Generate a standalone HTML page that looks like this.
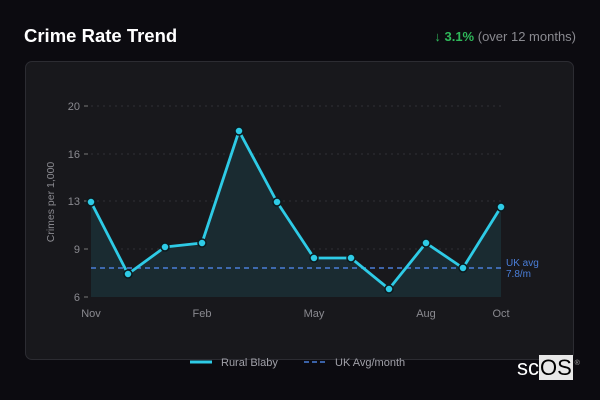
<!DOCTYPE html>
<html><head><meta charset="utf-8"><style>
html,body{margin:0;padding:0;}
body{width:600px;height:400px;background:#0c0b10;position:relative;overflow:hidden;font-family:"Liberation Sans",sans-serif;}
.title{position:absolute;left:24px;top:25px;color:#fff;font-weight:bold;font-size:18.5px;}
.chg{position:absolute;right:24px;top:29px;font-size:13px;color:#8a8a90;}
.chg b{color:#2fb85a;}
.card{position:absolute;left:25px;top:61px;width:549px;height:299px;background:#18181c;border:1px solid #2c2c32;border-radius:7px;box-sizing:border-box;}
svg{position:absolute;left:0;top:0;}
.logo{position:absolute;left:517px;top:358px;font-size:22px;color:#fff;font-family:"Liberation Sans",sans-serif;line-height:20px;}
.logo span{background:#e8e8e8;color:#000;padding:0 1px;}
.logo sup{font-size:7px;color:#aaa;position:absolute;top:-4px;right:-7px;}
</style></head><body>
<div class="title">Crime Rate Trend</div>
<div class="chg"><b>↓ 3.1%</b> (over 12 months)</div>
<div class="card"></div>
<svg width="600" height="400" font-family="Liberation Sans, sans-serif">
<g stroke="#303036" stroke-dasharray="2,4" stroke-width="1">
<line x1="91" y1="106" x2="501" y2="106"/><line x1="91" y1="154" x2="501" y2="154"/>
<line x1="91" y1="201" x2="501" y2="201"/><line x1="91" y1="249" x2="501" y2="249"/>
</g>
<g stroke="#777" stroke-width="1">
<line x1="84" y1="106" x2="88" y2="106"/><line x1="84" y1="154" x2="88" y2="154"/>
<line x1="84" y1="201" x2="88" y2="201"/><line x1="84" y1="249" x2="88" y2="249"/><line x1="84" y1="297" x2="88" y2="297"/>
</g>
<g fill="#8a8a90" font-size="11" text-anchor="end">
<text x="80" y="110">20</text><text x="80" y="158">16</text><text x="80" y="205">13</text><text x="80" y="253">9</text><text x="80" y="301">6</text>
</g>
<text transform="translate(54,202) rotate(-90)" fill="#8a8a90" font-size="10.5" text-anchor="middle">Crimes per 1,000</text>
<g fill="#8a8a90" font-size="11" text-anchor="middle">
<text x="91" y="317">Nov</text><text x="202" y="317">Feb</text><text x="314" y="317">May</text><text x="426" y="317">Aug</text><text x="501" y="317">Oct</text>
</g>
<polygon fill="#1a2b31" points="91,202 128,274 165,247 202,243 239,131 277,202 314,258 351,258 389,289 426,243 463,268 501,207 501,297 91,297"/>
<line x1="91" y1="268" x2="501" y2="268" stroke="#4a7ed8" stroke-width="1.6" stroke-dasharray="5,4"/>
<polyline fill="none" stroke="#2ecbe6" stroke-width="2.8" stroke-linejoin="round" points="91,202 128,274 165,247 202,243 239,131 277,202 314,258 351,258 389,289 426,243 463,268 501,207"/>
<g fill="#2ecbe6" stroke="#0c1a1e" stroke-width="1.5">
<circle cx="91" cy="202" r="4"/><circle cx="128" cy="274" r="4"/><circle cx="165" cy="247" r="4"/><circle cx="202" cy="243" r="4"/><circle cx="239" cy="131" r="4"/><circle cx="277" cy="202" r="4"/><circle cx="314" cy="258" r="4"/><circle cx="351" cy="258" r="4"/><circle cx="389" cy="289" r="4"/><circle cx="426" cy="243" r="4"/><circle cx="463" cy="268" r="4"/><circle cx="501" cy="207" r="4"/>
</g>
<g fill="#4a7ed8" font-size="10">
<text x="506" y="266">UK avg</text><text x="506" y="277">7.8/m</text>
</g>
<line x1="190" y1="362" x2="212" y2="362" stroke="#2ecbe6" stroke-width="3"/>
<text x="221" y="366" fill="#a0a0a8" font-size="11">Rural Blaby</text>
<line x1="304" y1="362" x2="326" y2="362" stroke="#4a7ed8" stroke-width="1.6" stroke-dasharray="5,3"/>
<text x="335" y="366" fill="#a0a0a8" font-size="11">UK Avg/month</text>
</svg>
<div class="logo">sc<span>OS</span><sup>®</sup></div>
</body></html>
